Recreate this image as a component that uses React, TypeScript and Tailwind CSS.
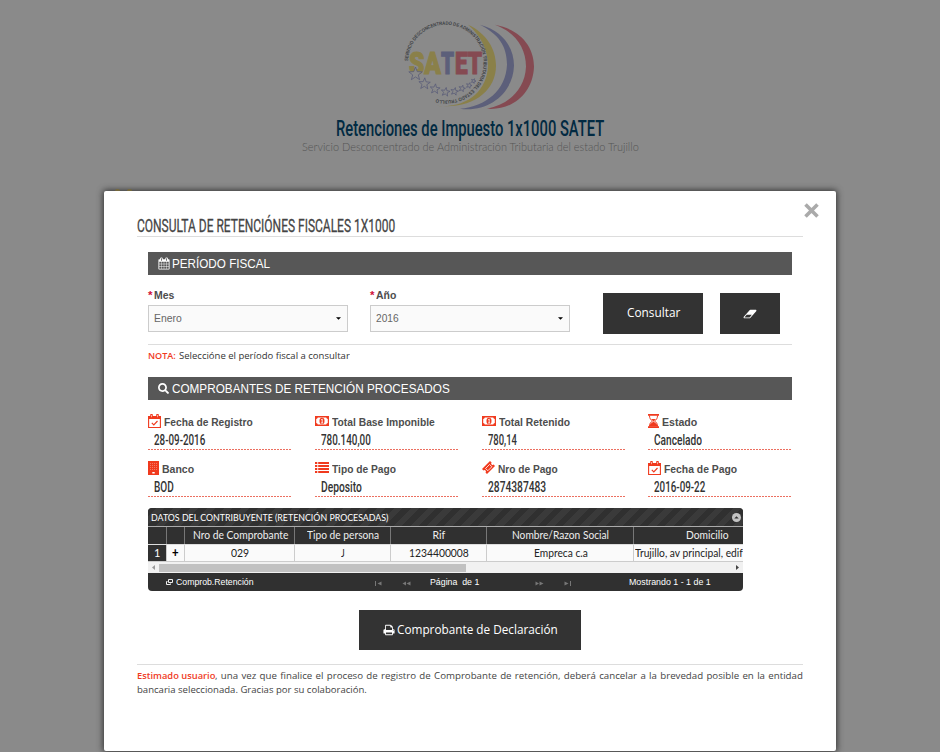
import React, { useLayoutEffect, useRef, useState } from "react";
import { FaSearch } from "react-icons/fa";

/* Single-line text squeezed or stretched to a given width. */
function Fit({ w, className = "", children }: { w: number; className?: string; children: React.ReactNode }) {
  const ref = useRef<HTMLSpanElement>(null);
  const [s, setS] = useState(1);
  useLayoutEffect(() => {
    if (ref.current) setS(w / ref.current.offsetWidth);
  }, [w]);
  return (
    <span className={"inline-flex whitespace-nowrap " + className} style={{ width: w }}>
      <span ref={ref} className="inline-block shrink-0 origin-left whitespace-pre" style={{ transform: `scaleX(${s})` }}>
        {children}
      </span>
    </span>
  );
}

const PRINT =
  "M448 1536h896v-256h-896v256zm0-640h896v-384h-160q-40 0-68-28t-28-68v-160h-640v640zm1152 64q0-26-19-45t-45-19-45 19-19 45 19 45 45 19 45-19 19-45zm128 0v416q0 13-9.5 22.5t-22.5 9.5h-224v160q0 40-28 68t-68 28h-960q-40 0-68-28t-28-68v-160h-224q-13 0-22.5-9.5t-9.5-22.5v-416q0-79 56.5-135.5t135.5-56.5h64v-544q0-40 28-68t68-28h672q40 0 88 20t76 48l152 152q28 28 48 76t20 88v256h64q79 0 135.5 56.5t56.5 135.5z";
const CALENDAR =
  "M192 1664h288v-288h-288v288zm352 0h320v-288h-320v288zm-352-352h288v-320h-288v320zm352 0h320v-320h-320v320zm-352-384h288v-288h-288v288zm736 736h320v-288h-320v288zm-384-736h320v-288h-320v288zm768 736h288v-288h-288v288zm-384-352h320v-320h-320v320zm-352-864v-288q0-13-9.5-22.5t-22.5-9.5h-64q-13 0-22.5 9.5t-9.5 22.5v288q0 13 9.5 22.5t22.5 9.5h64q13 0 22.5-9.5t9.5-22.5zm736 864h288v-320h-288v320zm-384-384h320v-288h-320v288zm384 0h288v-288h-288v288zm32-480v-288q0-13-9.5-22.5t-22.5-9.5h-64q-13 0-22.5 9.5t-9.5 22.5v288q0 13 9.5 22.5t22.5 9.5h64q13 0 22.5-9.5t9.5-22.5zm384-64v1280q0 52-38 90t-90 38h-1408q-52 0-90-38t-38-90v-1280q0-52 38-90t90-38h128v-96q0-66 47-113t113-47h64q66 0 113 47t47 113v96h384v-96q0-66 47-113t113-47h64q66 0 113 47t47 113v96h128q52 0 90 38t38 90z";
const ERASER =
  "M960 1408l336-384h-768l-336 384h768zm1013-1077q15 34 9.5 71.5t-30.5 65.5l-896 1024q-38 44-96 44h-768q-38 0-69.5-20.5t-47.5-54.5q-15-34-9.5-71.5t30.5-65.5l896-1024q38-44 96-44h768q38 0 69.5 20.5t47.5 54.5z";

function star(cx: number, cy: number, r: number, rot: number) {
  return Array.from({ length: 10 }, (_, i) => {
    const a = ((i * 36 - 90 + rot) * Math.PI) / 180;
    const q = i % 2 ? r * 0.42 : r;
    return `${(cx + q * Math.cos(a)).toFixed(2)},${(cy + q * Math.sin(a)).toFixed(2)}`;
  }).join(" ");
}

function Logo() {
  const stars: [number, number, number][] = [
    [15.5, 59, 7], [24.5, 68.8, 6], [35, 74, 5.2], [45.5, 77, 4.6], [54.5, 76.5, 4], [62, 73.5, 3.4], [69, 70.5, 3], [73.5, 66, 2.5],
  ];
  return (
    <svg width="140" height="100" viewBox="0 0 140 100" className="block font-['Liberation_Sans',sans-serif]">
      <g transform="translate(0 .8)">
        <path d="M68 9C86 17 96 33 96 50C96 75 73 94 36 90C66 93 87 76 88 50C88 35 81 20 68 9Z" fill="#8a8049" />
        <path d="M80 9C103 15 114 32 114 50C113 78 88 97 60 93C86 91 106 74 107 49C107 30 98 18 80 9Z" fill="#5c5f7a" />
        <path d="M95 9C122 14 134 32 134 51C133 78 112 95 87 93C110 88 125 73 126 51C126 31 114 16 95 9Z" fill="#854a52" />
      </g>
      <defs>
        <path id="ring" d="M8 46A37.800 37.800 0 1 1 34 83.500" />
      </defs>
      <text fontSize="4.9" fill="#3c3f44" fontWeight="700">
        <textPath href="#ring" textLength="186" lengthAdjust="spacingAndGlyphs">
          SERVICIO DESCONCENTRADO DE ADMINISTRACIÓN TRIBUTARIA DEL ESTADO TRUJILLO
        </textPath>
      </text>
      <g fontWeight="900" fontSize="31" strokeWidth="1.2" className="font-['Roboto',sans-serif]">
        <text x="9" y="59" textLength="32" lengthAdjust="spacingAndGlyphs" fill="#8a8049" stroke="#8a8049">SA</text>
        <text x="41" y="59" textLength="13" lengthAdjust="spacingAndGlyphs" fill="#5c5f7a" stroke="#5c5f7a">T</text>
        <text x="55" y="59" textLength="27" lengthAdjust="spacingAndGlyphs" fill="#854a52" stroke="#854a52">ET</text>
      </g>
      {stars.map(([x, y, r], i) => (
        <polygon key={i} points={star(x, y, r, i * 3)} fill="#8a8a8a" stroke="#555877" strokeWidth="0.7" />
      ))}
    </svg>
  );
}

function CalCheck() {
  return (
    <svg width="13" height="14" viewBox="0 0 13 14">
      <path d="M.6 2.500h11.800v11H.6z" stroke="currentColor" strokeWidth="1.100" fill="none" />
      <path d="M0 2h13v3H0z" fill="currentColor" />
      <path d="M3.500 1v2.200M9.500 1v2.200" stroke="currentColor" strokeWidth="2.600" strokeLinecap="round" />
      <path d="M3.500 1v2.200M9.500 1v2.200" stroke="#fff" strokeOpacity=".7" strokeWidth=".8" />
      <path d="M3.800 8.800l2 2L9.500 7" stroke="currentColor" strokeWidth="1.200" fill="none" />
    </svg>
  );
}
function Money() {
  return (
    <svg width="14" height="10" viewBox="0 0 15 10" preserveAspectRatio="none">
      <path fillRule="evenodd" fill="currentColor" d="M0 0h15v10H0zM3 1.400A2 2 0 0 1 1.300 3v4A2 2 0 0 1 3 8.600h9A2 2 0 0 1 13.700 7V3A2 2 0 0 1 12 1.400z" />
      <ellipse cx="7.500" cy="5" rx="2.700" ry="3.300" fill="currentColor" />
      <path d="M6.700 3.800l1-.8v4M6.500 7h2.200" stroke="#fff" strokeWidth=".9" fill="none" />
    </svg>
  );
}
function Hourglass() {
  return (
    <svg width="11" height="14" viewBox="0 0 11 14">
      <path d="M0 0h11v1.700H0zM0 12.300h11V14H0z" fill="currentColor" />
      <path d="M1.500 1.500c0 3 1 4 3 5.500c-2 1.500-3 2.500-3 5.500M9.500 1.500c0 3-1 4-3 5.500c2 1.500 3 2.500 3 5.500" stroke="currentColor" fill="none" />
      <path d="M1.500 12.500c0-3 2.500-3.500 4-5C7 9 9.500 9.500 9.500 12.500zM3.500 5h4L5.500 7.500z" fill="currentColor" />
    </svg>
  );
}
function Bank() {
  return (
    <svg width="11" height="14" viewBox="0 0 11 14">
      <path d="M0 0h11v14H0z" fill="currentColor" />
      <path d="M2 2.500h7M2 4.500h7M2 6.500h7M2 8.500h7" stroke="#fff" strokeOpacity=".4" strokeWidth=".8" strokeDasharray="1 1" />
      <path d="M4.300 11h2.400v1.500H4.300z" fill="#fff" />
    </svg>
  );
}
function ListIcon() {
  return (
    <svg width="14" height="11" viewBox="0 0 14 11">
      <path d="M0 1h2.300M3.200 1H14M0 4h2.300M3.200 4H14M0 7h2.300M3.200 7H14M0 10h2.300M3.200 10H14" stroke="currentColor" strokeWidth="1.900" />
    </svg>
  );
}
function Ticket() {
  return (
    <svg width="13" height="13" viewBox="0 0 13 13">
      <path d="M0 8L8 0l1.600 1.500a1.400 1.400 0 0 0 2 2L13 5L5 13L3.500 11.500a1.400 1.400 0 0 0-2-2z" fill="currentColor" />
      <path d="M3.500 7.500l4-4l2.400 2.200l-4 4z" stroke="#fff" strokeWidth=".8" fill="none" />
    </svg>
  );
}

const fields = [
  { icon: <CalCheck />, label: "Fecha de Registro", lw: 89, value: "28-09-2016", vw: 51 },
  { icon: <Money />, label: "Total Base Imponible", lw: 103, value: "780.140,00", vw: 50 },
  { icon: <Money />, label: "Total Retenido", lw: 71, value: "780,14", vw: 29 },
  { icon: <Hourglass />, label: "Estado", lw: 35, value: "Cancelado", vw: 48 },
  { icon: <Bank />, label: "Banco", lw: 32, value: "BOD", vw: 20 },
  { icon: <ListIcon />, label: "Tipo de Pago", lw: 64, value: "Deposito", vw: 41 },
  { icon: <Ticket />, label: "Nro de Pago", lw: 60, value: "2874387483", vw: 58 },
  { icon: <CalCheck />, label: "Fecha de Pago", lw: 73, value: "2016-09-22", vw: 51 },
];

function Field({ f }: { f: (typeof fields)[number] }) {
  return (
    <div className="h-[46px] w-[144px]">
      <div className="flex h-[14px] items-center text-[11.5px] font-bold leading-[14px] text-[#4d4d4d]">
        <span className="-mt-[2px] mr-[3px] text-[#f03a1e]">{f.icon}</span>
        <Fit w={f.lw}>{f.label}</Fit>
      </div>
      <div className="h-5 pl-[6px] pt-[2px] font-['Roboto',sans-serif] text-[15px] font-medium leading-[18px] text-[#333]">
        <Fit w={f.vw}>{f.value}</Fit>
      </div>
      <div className="h-px bg-[repeating-linear-gradient(90deg,#ec6f60_0,#ec6f60_2px,#fff_2px,#fff_3px)]" />
    </div>
  );
}

function Select({ label, lw, value, vw }: { label: string; lw: number; value: string; vw: number }) {
  return (
    <div className="w-[200px]">
      <div className="flex h-[14px] items-center text-[11.5px] font-bold text-[#4d4d4d]">
        <span className="mr-[2px] text-[#d0103a]">*</span>
        <Fit w={lw}>{label}</Fit>
      </div>
      <div className="mt-[2px] flex h-[27px] items-center justify-between border border-[#ccc] bg-[#fafafa] pl-[5px] pr-[6px] text-[11.5px] text-[#666]">
        <Fit w={vw}>{value}</Fit>
        <svg width="5" height="3" viewBox="0 0 6 3"><path d="M0 0h6L3 3z" fill="#000" /></svg>
      </div>
    </div>
  );
}

function Bar({ children }: { children: React.ReactNode }) {
  return <div className="flex h-[23px] items-center bg-[#575757] pb-px pl-[10px] text-[13px] leading-[21px] text-white">{children}</div>;
}

const cols = [
  { h: "", w: 19, hw: 0, v: "1", vw: 6 },
  { h: "", w: 18, hw: 0, v: "+", vw: 7 },
  { h: "Nro de Comprobante", w: 110, hw: 95, v: "029", vw: 18 },
  { h: "Tipo de persona", w: 96, hw: 72, v: "J", vw: 4 },
  { h: "Rif", w: 96, hw: 13, v: "1234400008", vw: 60 },
  { h: "Nombre/Razon Social", w: 147, hw: 97, v: "Empreca c.a", vw: 54 },
  { h: "Domicilio", w: 147, hw: 43, v: "Trujillo, av principal, edif", vw: 108 },
];

function Grid() {
  return (
    <div className="h-[83px] w-[595px] overflow-hidden rounded-[4px] bg-[#303030] font-['Lato',sans-serif] text-white">
      <div className="flex h-[18px] items-center justify-between bg-[repeating-linear-gradient(135deg,#303030_0,#303030_6px,#3a3a3a_6px,#3a3a3a_12px)] pl-[3px] pr-[2px] text-[9px]">
        <Fit w={237} className="pt-px">DATOS DEL CONTRIBUYENTE (RETENCIÓN PROCESADAS)</Fit>
        <svg width="9" height="9" viewBox="0 0 10 10"><circle cx="5" cy="5" r="5" fill="#c4c4c4" /><path d="M2.500 6L5 3.500L7.500 6z" fill="#303030" /></svg>
      </div>
      <div className="flex h-[18px] w-[640px] border-t border-[#aaa]">
        {cols.map((c, i) => (
          <div key={i} style={{ width: c.w }} className="flex h-[17px] shrink-0 items-center justify-center border-r border-[#777] pl-px text-[10.5px] text-[#eee]">
            {c.hw > 0 && <Fit w={c.hw}>{c.h}</Fit>}
          </div>
        ))}
      </div>
      <div className="flex h-[18px] w-[640px] border-y border-b-[#ccc] border-t-[#ddd] bg-[#fafafa]">
        {cols.map((c, i) => (
          <div
            key={i}
            style={{ width: c.w }}
            className={
              "flex h-4 shrink-0 items-center border-r border-[#ccc] text-[11px] " +
              (i === 0 ? "justify-center bg-[#303030] text-white" : i === 1 ? "justify-center text-[13px] font-black text-black" : i === 6 ? "justify-start pl-[1px] text-[#222]" : "justify-center pl-px text-[#222]")
            }
          >
            <Fit w={c.vw}>{c.v}</Fit>
          </div>
        ))}
      </div>
      <div className="flex h-[11px] items-center justify-between bg-[#f1f1f1] px-[4px]">
        <svg width="3" height="5" viewBox="0 0 3 5"><path d="M3 0v5L0 2.500z" fill="#999" /></svg>
        <div className="ml-[4px] mr-auto h-[8px] w-[307px] bg-[#c1c1c1]" />
        <svg width="3" height="5" viewBox="0 0 3 5"><path d="M0 0v5L3 2.500z" fill="#444" /></svg>
      </div>
      <div className="flex h-[18px] items-center font-['Liberation_Sans',sans-serif] text-[9.5px]">
        <svg className="ml-[18px] mr-[3px]" width="7" height="6" viewBox="0 0 7 6"><path d="M2.500.5h4v3h-4zM1.500 2.500h-1v3h4v-1" stroke="#eee" fill="none" /></svg>
        <Fit w={78}>Comprob.Retención</Fit>
        <svg className="ml-[121px] mt-[2px]" width="7" height="5" viewBox="0 0 7 5"><path d="M0 0h1v5H0zM6.500.5v4L2.500 2.500z" fill="#777" /></svg>
        <svg className="ml-[20px] mt-[2px]" width="9" height="5" viewBox="0 0 9 5"><path d="M4 .5v4L.5 2.500zM8.500.5v4L4.500 2.500z" fill="#777" /></svg>
        <Fit w={49} className="ml-[19px] mr-[1px]">{"Página  de 1"}</Fit>
        <svg className="ml-[55px] mt-[2px]" width="9" height="5" viewBox="0 0 9 5"><path d="M.5.5v4L4 2.500zM4.500.5v4l4-2z" fill="#777" /></svg>
        <svg className="ml-[20px] mt-[2px]" width="7" height="5" viewBox="0 0 7 5"><path d="M6 0h1v5H6zM.5.5v4l4-2z" fill="#777" /></svg>
        <Fit w={82} className="ml-[58px]">Mostrando 1 - 1 de 1</Fit>
      </div>
    </div>
  );
}

export default function App() {
  return (
    <div className="h-[752px] w-[940px] overflow-hidden bg-[#8a8a8a] font-['Liberation_Sans',Arial,sans-serif]">
      <header className="flex h-[188px] flex-col items-center pt-[15px]">
        <Logo />
        <Fit w={268} className="mt-[2px] h-[23px] font-['Roboto',sans-serif] text-[22px] font-medium leading-[23px] text-[#022a42]">
          Retenciones de Impuesto 1x1000 SATET
        </Fit>
        <Fit w={337} className="h-[14px] font-['Lato',sans-serif] text-[12px] font-light leading-[14px] text-[#555]">
          Servicio Desconcentrado de Administración Tributaria del estado Trujillo
        </Fit>
      </header>
      <div className="ml-[115px] flex h-[3px] gap-[7px] pt-[1px]">
        <i className="h-[2px] w-[5px] rounded-t bg-[#75683c]" />
        <i className="h-[2px] w-[5px] rounded-t bg-[#75683c]" />
      </div>
      <main className="ml-[104px] h-[560px] w-[732px] rounded-[2px] bg-white px-[33px] pt-[12px] shadow-[0_0_6px_1px_#333]">
        <div className="-mr-[16px] flex h-[15px] justify-end">
          <svg width="15" height="15" viewBox="0 0 15 15"><path d="M1.500 1.500l12 12m0-12l-12 12" stroke="#aaa" strokeWidth="3.600" /></svg>
        </div>
        <div className="-mt-[6px] h-[25px] w-[666px] border-b border-[#ddd] pt-[2px]">
          <Fit w={258} className="font-['Roboto',sans-serif] text-[19px] leading-[24px] text-[#444] [-webkit-text-stroke:0.3px_#444]">
            CONSULTA DE RETENCIÓNES FISCALES 1X1000
          </Fit>
        </div>
        <section className="ml-[11px] mt-[15px] w-[644px]">
          <Bar>
            <svg className="mr-[2px]" width="12" height="13" viewBox="0 0 1792 1792" fill="#fff"><path d={CALENDAR} /></svg>
            <Fit w={98}>PERÍODO FISCAL</Fit>
          </Bar>
          <div className="flex h-[70px] border-b border-[#ddd] pt-[14px]">
            <Select label="Mes" lw={20} value="Enero" vw={28} />
            <div className="w-[22px]" />
            <Select label="Año" lw={20} value="2016" vw={23} />
            <div className="ml-[33px] mt-[4px] flex h-[41px] w-[100px] items-center justify-center bg-[#333] font-['Open_Sans',sans-serif] text-[12.5px] text-white">
              <Fit w={53}>Consultar</Fit>
            </div>
            <div className="ml-[17px] mt-[4px] flex h-[41px] w-[60px] items-center justify-center bg-[#333]">
              <svg width="14" height="12" viewBox="0 0 2048 1792" fill="#fff"><path d={ERASER} /></svg>
            </div>
          </div>
          <div className="flex h-[32px] gap-[3px] pt-[3px] font-['Open_Sans',sans-serif] text-[9.7px] leading-[16px] text-[#333]">
            <Fit w={28} className="font-semibold text-[#f03a1e]">NOTA:</Fit>
            <Fit w={171}>Seleccióne el período fiscal a consultar</Fit>
          </div>
          <Bar>
            <FaSearch className="mr-[3px] size-[11px]" />
            <Fit w={278}>COMPROBANTES DE RETENCIÓN PROCESADOS</Fit>
          </Bar>
          <div className="grid h-[108px] grid-cols-[166.5px_167px_166.5px_144px] pt-[15px]">
            {fields.map((f, i) => <Field key={i} f={f} />)}
          </div>
        </section>
        <div className="ml-[11px]"><Grid /></div>
        <div className="mx-auto mt-[19px] flex h-[40px] w-[222px] items-center justify-center gap-[2px] bg-[#333] font-['Open_Sans',sans-serif] text-[12.5px] text-white">
          <svg width="12" height="12" viewBox="0 0 1792 1792" fill="#fff"><path d={PRINT} /></svg>
          <Fit w={161}>Comprobante de Declaración</Fit>
        </div>
        <footer className="mt-[14px] w-[666px] border-t border-[#ddd] pt-[4px] font-['Open_Sans',sans-serif] text-[9.7px] leading-[14px] text-[#444]">
          <div className="flex h-[14px]">
            <Fit w={78} className="font-semibold text-[#f03a1e]">Estimado usuario</Fit>
            <div className="flex flex-1 justify-between">
              {", una vez que finalice el proceso de registro de Comprobante de retención, deberá cancelar a la brevedad posible en la entidad"
                .split(" ")
                .map((t, i) => <span key={i}>{t}</span>)}
            </div>
          </div>
          <Fit w={230}>bancaria seleccionada. Gracias por su colaboración.</Fit>
        </footer>
      </main>
    </div>
  );
}
